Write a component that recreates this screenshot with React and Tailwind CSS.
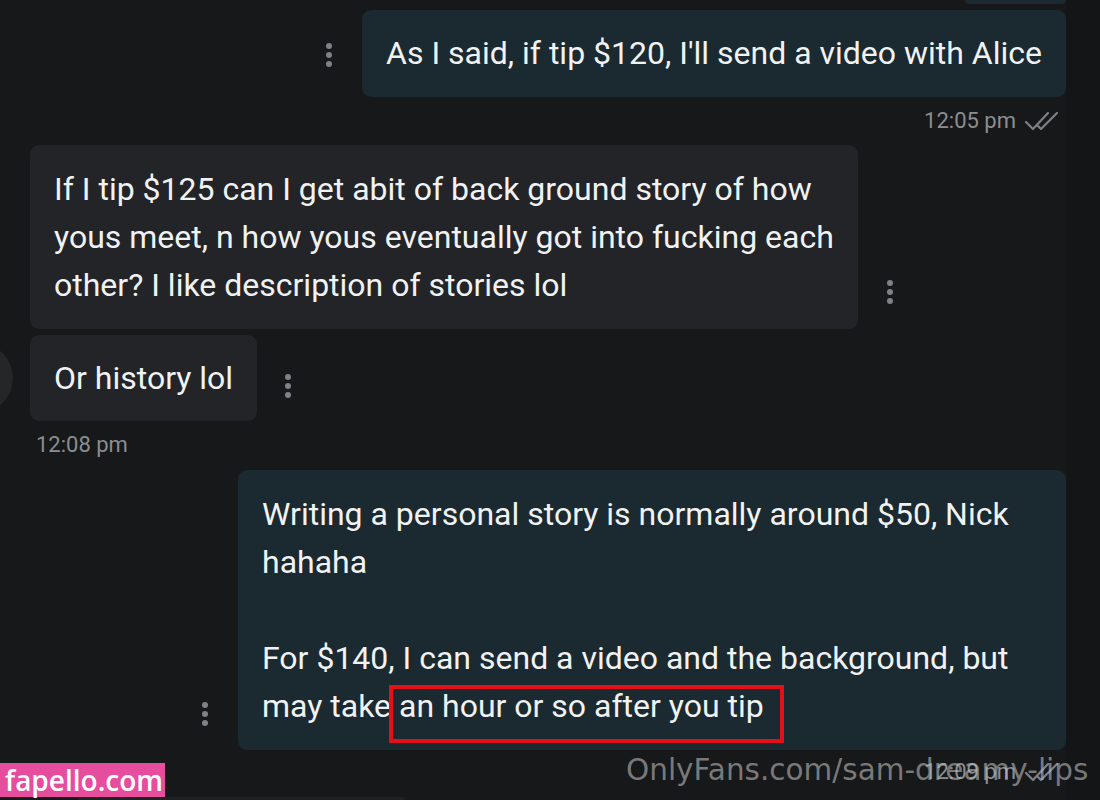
import React from "react";

const Dots = ({ className = "" }) => (
  <div className={`flex flex-col items-center gap-[3px] w-[8px] ${className}`}>
    <span className="w-[6px] h-[6px] rounded-full bg-[#7e8185]" />
    <span className="w-[6px] h-[6px] rounded-full bg-[#7e8185]" />
    <span className="w-[6px] h-[6px] rounded-full bg-[#7e8185]" />
  </div>
);

const DoubleCheck = () => (
  <svg width="36" height="22" viewBox="0 0 36 22" fill="none" stroke="#7d8084" strokeWidth="2.2" strokeLinecap="round" strokeLinejoin="round">
    <path d="M2 12 L9 19 L24 3" />
    <path d="M14 16 L17 19 L33 3" />
  </svg>
);

const Time = ({ children, check }) => (
  <div className="flex items-center gap-[8px] text-[22px] leading-[26px] text-[#8b8e91]">
    <span>{children}</span>
    {check && <DoubleCheck />}
  </div>
);

export default function App() {
  return (
    <div
      className="relative w-[1100px] h-[800px] overflow-hidden bg-[#171819] flex"
      style={{ fontFamily: "Roboto, 'Liberation Sans', sans-serif" }}
    >
      <div className="w-[1066px] flex flex-col text-[32px] leading-[48px] text-[#f1f2f3]">
        {/* tail of previous bubble */}
        <div className="ml-auto w-[101px] h-[4px] rounded-b-[8px] bg-[#1b2930]" />

        {/* outgoing 1 */}
        <div className="mt-[6px] flex justify-end items-center">
          <Dots className="mr-[29px] mt-[2px]" />
          <div className="bg-[#1b2930] rounded-[9px] px-6 py-[20px] leading-[47px] whitespace-nowrap">
            As I said, if tip $120, I'll send a video with Alice
          </div>
        </div>
        <div className="mt-[11px] flex justify-end pr-[6px]">
          <Time check>12:05 pm</Time>
        </div>

        {/* incoming */}
        <div className="mt-[11px] flex items-end pl-[30px]">
          <div className="w-[828px] bg-[#222427] rounded-[9px] px-6 py-[20px] leading-[48px] whitespace-nowrap">
            If I tip $125 can I get abit of back ground story of how
            <br />
            yous meet, n how yous eventually got into fucking each
            <br />
            other? I like description of stories lol
          </div>
          <Dots className="ml-[28px] mb-[25px]" />
        </div>

        <div className="mt-[6px] flex items-center">
          <div className="w-[70px] h-[70px] rounded-full bg-[#242628] ml-[-57px] mr-[17px] shrink-0" />
          <div className="bg-[#222427] rounded-[9px] px-6 py-[19px] leading-[48px] whitespace-nowrap">
            Or history lol
          </div>
          <Dots className="ml-[27px] mt-[16px]" />
        </div>
        <div className="mt-[11px] pl-[36px]">
          <Time>12:08 pm</Time>
        </div>

        {/* outgoing 2 */}
        <div className="mt-[12px] flex justify-end items-end">
          <Dots className="mr-[29px] mb-[24px]" />
          <div className="w-[828px] bg-[#1b2930] rounded-[9px] px-6 py-[20px] leading-[48px] whitespace-nowrap">
            Writing a personal story is normally around $50, Nick
            <br />
            hahaha
            <br />
            <br />
            For $140, I can send a video and the background, but
            <br />
            may take{" "}
            <span className="relative">
              an hour or so after you tip
              <span className="absolute left-[-10px] right-[-20px] top-[-2px] h-[58px] border-4 border-[#e3101a]" />
            </span>
          </div>
        </div>
        <div className="mt-[9px] flex justify-end pr-[6px]">
          <Time check>12:09 pm</Time>
        </div>

        {/* next bubble top edge */}
        <div className="mt-auto ml-[78px] w-[327px] h-[3px] bg-[#1f2123] rounded-t-[6px]" />
      </div>
      <div className="flex-1 bg-[#141516]" />

      {/* watermarks */}
      <div
        className="absolute left-[626px] top-[750px] text-[29.5px] leading-[40px] text-[#bdbdbd]/60 whitespace-nowrap"
        style={{ fontFamily: "'DejaVu Sans', sans-serif" }}
      >
        OnlyFans.com/sam-dreamy-lips
      </div>
      <div
        className="absolute left-0 top-[763px] h-[34px] w-[165px] bg-[#e64d9d] text-white text-[28px] leading-[34px] font-semibold pl-[5px] whitespace-nowrap"
        style={{ fontFamily: "'Open Sans', sans-serif" }}
      >
        fapello.com
      </div>
    </div>
  );
}
